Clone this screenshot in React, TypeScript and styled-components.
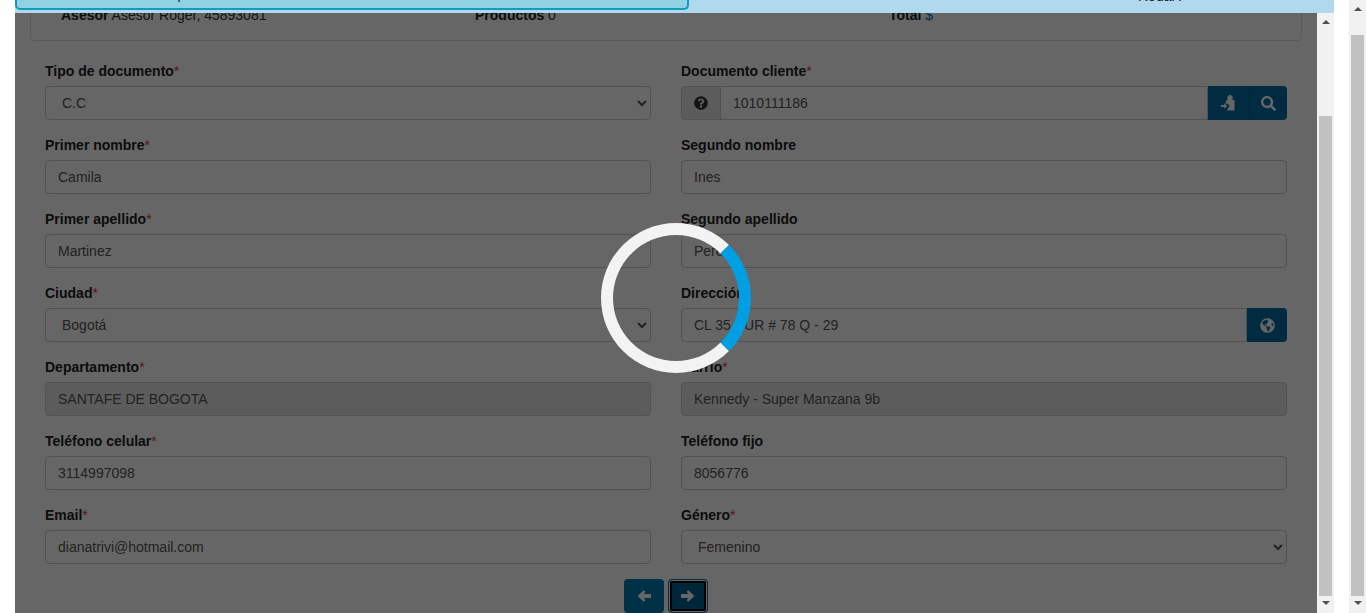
import React from "react";
import styled, { createGlobalStyle } from "styled-components";
import { FaGlobeAmericas, FaQuestionCircle, FaSearch } from "react-icons/fa";

const Global = createGlobalStyle`
  html, body { margin: 0; padding: 0; height: 613px; overflow: hidden; background: #fff; }
  * { box-sizing: border-box; }
  body { font-family: "Liberation Sans", Arial, sans-serif; font-size: 14px; color: #222; }
`;

const Page = styled.div`
  display: flex;
  height: 613px;
  width: 1366px;
  overflow: hidden;
  background: #fff;
`;
const Frame = styled.div`
  margin-left: 15px;
  width: 1319px;
  height: 613px;
  display: flex;
  flex-direction: column;
`;
const OuterBar = styled.div`
  margin-left: 15px;
  width: 17px;
  height: 613px;
`;
const TopBar = styled.div`
  height: 13px;
  flex: none;
  background: #b0d9ee;
  display: flex;
  overflow: hidden;
`;
const TabLeft = styled.div`
  width: 674px;
  height: 10px;
  background: #90d1e3;
  border: 2px solid #0f9dbb;
  border-top: 0;
  border-radius: 0 0 5px 5px;
  overflow: hidden;
  padding-left: 131px;
`;
const TabRight = styled.div`
  flex: 1;
  height: 10px;
  overflow: hidden;
  padding-left: 449px;
`;
const TabText = styled.div<{ $shift: number }>`
  margin-top: ${(p) => p.$shift}px;
  line-height: 16px;
  font-size: 14px;
  color: #222;
  white-space: nowrap;
`;
const Body = styled.div`
  display: flex;
  height: 600px;
`;
const Content = styled.div`
  position: relative;
  width: 1302px;
  height: 600px;
  overflow: hidden;
  background: #fff;
`;
const Card = styled.div`
  margin: -40px 15px 0;
  height: 68px;
  padding: 31px 30px 0;
  border: 1px solid rgba(0, 0, 0, 0.125);
  border-radius: 4px;
  display: grid;
  grid-template-columns: 414px 414px 1fr;
  line-height: 21px;
  color: #333;
`;
const Summary = styled.div`
  white-space: nowrap;
  b { font-weight: 700; color: #222; }
  span { color: #0080c0; }
`;
const FormGrid = styled.div`
  margin-top: 20px;
  padding: 0 30px;
  display: grid;
  grid-template-columns: 606px 606px;
  column-gap: 30px;
  row-gap: 15px;
`;
const Field = styled.div`
  display: flex;
  flex-direction: column;
`;
const Label = styled.label`
  font-weight: 700;
  font-size: 14px;
  line-height: 21px;
  height: 21px;
  margin-bottom: 4px;
  i { font-style: normal; color: #dc3545; font-weight: 400; }
`;
const Input = styled.input<{ $grouped?: boolean; $left?: boolean }>`
  width: 100%;
  flex: 0 0 34px;
  min-width: 0;
  height: 34px;
  padding: 6px 12px;
  font: 14px "Liberation Sans", Arial, sans-serif;
  color: #555;
  background: ${(p) => (p.readOnly ? "#e6e6e6" : "#fff")};
  border: 1px solid #ccc;
  border-radius: ${(p) => (p.$grouped ? (p.$left ? "4px 0 0 4px" : "0") : "4px")};
  outline: none;
`;
const GroupInput = styled(Input)`
  flex: 1 1 0;
`;
const Select = styled.select`
  width: 100%;
  height: 34px;
  padding: 6px 12px;
  font: 14px "Liberation Sans", Arial, sans-serif;
  color: #555;
  background: #fff;
  border: 1px solid #ccc;
  border-radius: 4px;
  outline: none;
`;
const Group = styled.div`
  display: flex;
  height: 34px;
`;
const Prepend = styled.div`
  width: 39px;
  flex: none;
  display: flex;
  align-items: center;
  justify-content: center;
  background: #e6e6e6;
  border: 1px solid #ccc;
  border-right: 0;
  border-radius: 4px 0 0 4px;
  color: #333;
  font-size: 14px;
`;
const IconButton = styled.button<{ $last?: boolean; $first?: boolean }>`
  width: ${(p) => (p.$first ? "40px" : "39px")};
  flex: none;
  height: 34px;
  padding: 0;
  display: flex;
  align-items: center;
  justify-content: center;
  color: #fff;
  font-size: 15px;
  background: #006ba0;
  border: 0;
  border-left: ${(p) => (p.$first ? "0" : "1px solid #005f8f")};
  border-radius: ${(p) => (p.$last ? "0 4px 4px 0" : "0")};
`;
const GlobeButton = styled(IconButton)`
  width: 40px;
  border-left: 0;
`;
const Nav = styled.div`
  margin-top: 15px;
  display: flex;
  justify-content: center;
  gap: 4px;
`;
const NavButton = styled.button<{ $focused?: boolean }>`
  width: 40px;
  height: 34px;
  padding: 0;
  display: flex;
  align-items: center;
  justify-content: center;
  color: #fff;
  border-radius: 4px;
  border: ${(p) => (p.$focused ? "1px solid #006ba0" : "0")};
  background: ${(p) => (p.$focused ? "#00628f" : "#007ab2")};
  box-shadow: ${(p) => (p.$focused ? "inset 0 0 0 1px #fff, inset 0 0 0 3px #000" : "none")};
`;
const Backdrop = styled.div`
  position: absolute;
  inset: 0;
  background: rgba(0, 0, 0, 0.6);
`;
const Spinner = styled.div`
  position: absolute;
  left: 586px;
  top: 210px;
  width: 150px;
  height: 150px;
  border-radius: 50%;
  border: 12px solid #f3f3f3;
  border-right-color: #009fe3;
`;
const Track = styled.div<{ $thumbTop: number }>`
  position: relative;
  width: 17px;
  height: 100%;
  flex: none;
  background: #f1f1f1;
  &::after {
    content: "";
    position: absolute;
    left: 2px;
    width: 13px;
    top: ${(p) => p.$thumbTop}px;
    bottom: 17px;
    background: #c1c1c1;
  }
`;
const Arrow = styled.div<{ $dir: "up" | "down"; $offset: number }>`
  position: absolute;
  left: 5px;
  width: 0;
  height: 0;
  border-left: 4px solid transparent;
  border-right: 4px solid transparent;
  ${(p) =>
    p.$dir === "up"
      ? `top: ${p.$offset}px; border-bottom: 4px solid #505050;`
      : `bottom: ${p.$offset}px; border-top: 4px solid #505050;`}
`;

const req = <i>*</i>;

function ClipIcon() {
  return (
    <svg width="16" height="16" viewBox="0 0 16 16" fill="currentColor">
      <path d="M6.500 5h1.800a2.700 2.700 0 1 1 3.400 0H14.500v10.500H7.500v-2.200l2.300-2.300L7.500 8.700H5.800V6z" />
      <path d="M1 10.100h3.200V8.300l3.300 2.700-3.300 2.700v-1.800H1z" />
    </svg>
  );
}

function ChunkyArrow({ left }: { left?: boolean }) {
  return (
    <svg
      width="14"
      height="12"
      viewBox="0 0 14 12"
      fill="currentColor"
      style={left ? { transform: "scaleX(-1)" } : undefined}
    >
      <path d="M0 4h7.500L5.500 1.800 7.200.2 13.500 6l-6.300 5.800-1.700-1.600L7.500 8H0z" />
    </svg>
  );
}

export default function App() {
  return (
    <Page>
      <Global />
      <Frame>
        <TopBar>
          <TabLeft>
            <TabText $shift={-14}>Comprar</TabText>
          </TabLeft>
          <TabRight>
            <TabText $shift={-12}>Rodar?</TabText>
          </TabRight>
        </TopBar>
        <Body>
          <Content>
            <Card>
              <Summary>
                <b>Asesor</b> Asesor Roger, 45893081
              </Summary>
              <Summary>
                <b>Productos</b> 0
              </Summary>
              <Summary>
                <b>Total</b> <span>$</span>
              </Summary>
            </Card>
            <FormGrid>
              <Field>
                <Label>Tipo de documento{req}</Label>
                <Select defaultValue="C.C">
                  <option>C.C</option>
                </Select>
              </Field>
              <Field>
                <Label>Documento cliente{req}</Label>
                <Group>
                  <Prepend>
                    <FaQuestionCircle />
                  </Prepend>
                  <GroupInput $grouped defaultValue="1010111186" />
                  <IconButton $first>
                    <ClipIcon />
                  </IconButton>
                  <IconButton $last>
                    <FaSearch />
                  </IconButton>
                </Group>
              </Field>
              <Field>
                <Label>Primer nombre{req}</Label>
                <Input defaultValue="Camila" />
              </Field>
              <Field>
                <Label>Segundo nombre</Label>
                <Input defaultValue="Ines" />
              </Field>
              <Field>
                <Label>Primer apellido{req}</Label>
                <Input defaultValue="Martinez" />
              </Field>
              <Field>
                <Label>Segundo apellido</Label>
                <Input defaultValue="Perez" />
              </Field>
              <Field>
                <Label>Ciudad{req}</Label>
                <Select defaultValue="Bogotá">
                  <option>Bogotá</option>
                </Select>
              </Field>
              <Field>
                <Label>Dirección{req}</Label>
                <Group>
                  <GroupInput $grouped $left defaultValue="CL 35 SUR # 78 Q - 29" />
                  <GlobeButton $last>
                    <FaGlobeAmericas />
                  </GlobeButton>
                </Group>
              </Field>
              <Field>
                <Label>Departamento{req}</Label>
                <Input readOnly defaultValue="SANTAFE DE BOGOTA" />
              </Field>
              <Field>
                <Label>Barrio{req}</Label>
                <Input readOnly defaultValue="Kennedy - Super Manzana 9b" />
              </Field>
              <Field>
                <Label>Teléfono celular{req}</Label>
                <Input defaultValue="3114997098" />
              </Field>
              <Field>
                <Label>Teléfono fijo</Label>
                <Input defaultValue="8056776" />
              </Field>
              <Field>
                <Label>Email{req}</Label>
                <Input defaultValue="dianatrivi@hotmail.com" />
              </Field>
              <Field>
                <Label>Género{req}</Label>
                <Select defaultValue="Femenino">
                  <option>Femenino</option>
                </Select>
              </Field>
            </FormGrid>
            <Nav>
              <NavButton>
                <ChunkyArrow left />
              </NavButton>
              <NavButton $focused>
                <ChunkyArrow />
              </NavButton>
            </Nav>
            <Backdrop />
            <Spinner />
          </Content>
          <Track $thumbTop={103}>
            <Arrow $dir="up" $offset={7} />
            <Arrow $dir="down" $offset={8} />
          </Track>
        </Body>
      </Frame>
      <OuterBar>
        <Track $thumbTop={35}>
          <Arrow $dir="up" $offset={7} />
          <Arrow $dir="down" $offset={8} />
        </Track>
      </OuterBar>
    </Page>
  );
}
